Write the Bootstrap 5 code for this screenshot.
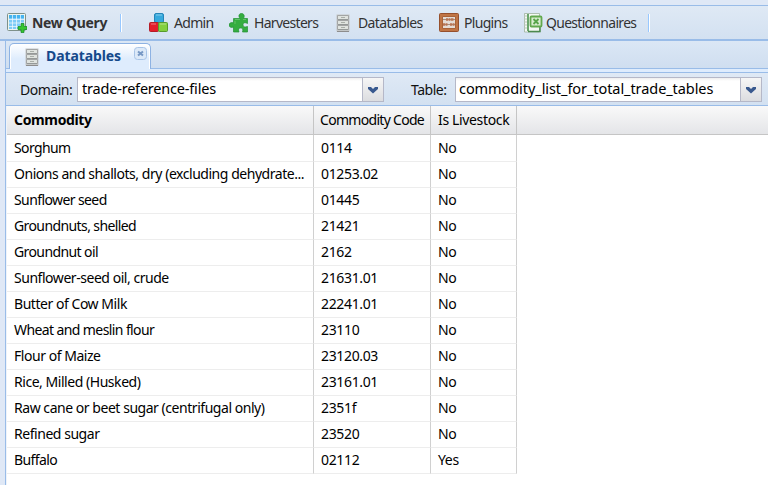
<!DOCTYPE html>
<html lang="en">
<head>
<meta charset="utf-8">
<meta name="viewport" content="width=device-width, initial-scale=1">
<title>Datatables</title>
<link href="https://cdn.jsdelivr.net/npm/bootstrap@5.3.0/dist/css/bootstrap.min.css" rel="stylesheet">
<style>
html,body{height:100%}
body{background:#dfe8f6;font-family:"Noto Sans","Liberation Sans",sans-serif;font-size:14px;line-height:20px;color:#000;letter-spacing:-.35px;overflow:hidden}
.app-bar{margin-top:5px;height:36px;border-top:1px solid #99bce8;border-bottom:2px solid #99bce8;background:linear-gradient(#dfe9f5,#d3e1f1);padding:0 0 0 7px}
.tool{height:33px;color:#333;white-space:nowrap;padding:0;border:0;background:none;text-align:left;letter-spacing:-.7px}
.tool svg{flex:none;margin-right:5px}
.tool-sep{width:2px;height:18px;background:linear-gradient(90deg,#98c8ff 50%,#fff 50%)}
.t-new{width:113px;letter-spacing:-.3px}
.t-admin{width:80px;margin-left:27px}
.t-harv{width:107px}
.t-data{width:103px;letter-spacing:-.6px}
.t-data svg{margin-right:8px}
.t-plug{width:84px}
.t-ques{width:125px;letter-spacing:-.65px;font-size:13.9px}
.t-ques svg{margin-right:3px}
.panel{margin-left:5px;height:444px;border-left:1px solid #99bce8}
.tabs{height:32px;background:linear-gradient(#dbe7f5 0,#cfdef0 27px,#99bce8 27px,#99bce8 28px,#deecfd 28px,#deecfd 31px,#99bce8 31px);padding:2px 0 0 3px}
.tab-item{position:relative;width:142px;height:26px;border:1px solid #8db2e3;border-bottom:0;border-radius:5px 5px 0 0;background:linear-gradient(#fff,#deecfd 60%);box-shadow:inset 1px 1px #fff,inset -1px 0 #fff;padding-left:15px;color:#15498b}
.t-tab{letter-spacing:-.1px;margin:-2px 0 0 -1px}
.tab-close{position:absolute;right:3px;top:3px;line-height:0;padding:0;border:0;background:none}
.filters{height:33px;background:linear-gradient(#dfe9f5,#d3e1f1);border-bottom:1px solid #99bce8;padding:0 6px 0 14px;color:#111}
.filters label{letter-spacing:-.5px;padding-top:1px}
.l-dom{width:57px}
.c-dom{width:307px}
.l-table{width:44px;margin-left:27px}
.c-table{width:307px}
.combo{height:25px;border:1px solid #b5b8c8;background:linear-gradient(#eee,#fff 3px);margin-top:1px}
.combo input{border:0;background:none;outline:0;min-width:0;padding:0 0 3px 4px;height:22px;color:#000;font-size:14.5px;letter-spacing:-.2px}
.c-table input{letter-spacing:-.07px;padding-left:3px}
.combo button{width:21px;border:0;border-left:1px solid #b5b8c8;background:linear-gradient(#f6f6f6,#dcdde0);padding:0;flex:none}
.grid-box{height:379px;background:linear-gradient(#f9f9f9,#e4e5e8 28px,#c5c5c5 28px,#c5c5c5 29px,#fff 29px);border-left:1px solid #eef3fa}
.grid{table-layout:fixed;width:510px;border-collapse:separate;border-spacing:0;margin:0}
.grid th{height:29px;padding:0 0 2px 6px;font-weight:400;border-right:1px solid #c5c5c5;white-space:nowrap}
.grid th:first-child{font-weight:700;padding-left:7px}
.grid th:nth-child(2){letter-spacing:-.7px}
.grid th:nth-child(3){padding-left:7px}
.grid tbody td{height:26px;padding:0 0 2px 7px;border-bottom:1px solid #ededed;border-right:1px solid #d0d0d0;white-space:nowrap;line-height:23px}
.grid tbody td:first-child{letter-spacing:-.46px}
.grid tbody .snug td:first-child{letter-spacing:-.6px}
.grid tbody tr:first-child td{height:27px;padding-top:1px}
</style>
<script src="https://cdn.jsdelivr.net/npm/bootstrap@5.3.0/dist/js/bootstrap.bundle.min.js"></script>
</head>
<body>
<svg class="d-none">
<symbol id="cabinet" viewBox="0 0 14 18"><path d="M0.500 .5h13v17H.5z" fill="#c4c7c7"/><path d="M1 17.500h12" stroke="#8d8d8d"/><g fill="#dfe3df" stroke="#a3a5a5"><path d="M1.5 1.500h11v4h-11zM1.500 6.500h11v4h-11zM1.500 11.500h11v4h-11z"/></g><path d="M5 3.500h4M5 8.500h4M5 13.500h4" stroke="#a9aea9"/><path d="M2 5.500h10M2 10.500h10M2 15.500h10" stroke="#959998"/></symbol>
</svg>
<header class="app-bar d-flex align-items-center">
<button class="tool d-flex align-items-center fw-bold t-new"><svg width="20" height="20" viewBox="0 0 20 20"><rect x=".5" y=".5" width="18" height="17" rx="1" fill="#edf5ef" stroke="#7e918a"/><path d="M2 2h15v14H2z" fill="#7dcbf8"/><path d="M2 2h15v3H2z" fill="#46b4ef"/><path d="M2 6.5h15M2 10h15M2 13.5h15M5.5 2v14M9.5 2v14M13.5 2v14" stroke="#f4fbff" stroke-width=".7"/><path d="M14 10.500h3v3h3v3h-3v3h-3v-3h-3v-3h3z" fill="#36c531" stroke="#118525" stroke-width=".7"/></svg>New Query</button>
<span class="tool-sep"></span>
<button class="tool d-flex align-items-center t-admin"><svg width="20" height="20" viewBox="0 0 20 20"><rect x="5.500" y=".5" width="9" height="9" rx="1.500" fill="#36a9dd" stroke="#2585b8"/><rect x=".5" y="9.500" width="9" height="9" rx="1" fill="#e31e2b" stroke="#b51c28"/><rect x="9.500" y="9.500" width="9" height="9" rx="1" fill="#83cf3f" stroke="#579b2c"/><path d="M7 2h6M2 11h5M11 11h6" stroke="#fff" opacity=".4"/></svg>Admin</button>
<button class="tool d-flex align-items-center t-harv"><svg width="20" height="20" viewBox="0 0 20 20"><path d="M4.500 5.500H11C9 3 10 .5 12.500 .5s3.500 2.500 2 5h4v5c-3-1.500-4.500-.5-4.500 1.500s2 2.500 4.500 1.500v5.500h-5c1-3 0-4-2-4s-2.500 1-1.500 4H4.500v-5c-2 1-4.500 0-4.500-2s2.500-3 4.500-2z" fill="#35ad41" stroke="#229033" stroke-width=".7"/><path d="M6 6.500h5M14 6.500h3M6 8v3" stroke="#76cf79" opacity=".7"/></svg>Harvesters</button>
<button class="tool d-flex align-items-center t-data"><svg width="14" height="18"><use href="#cabinet"/></svg>Datatables</button>
<button class="tool d-flex align-items-center t-plug"><svg width="20" height="20" viewBox="0 0 20 20"><rect x=".5" y=".5" width="19" height="18" rx="1" fill="#c07546" stroke="#96502d"/><path d="M3.500 3.500h13v12h-13z" fill="#e4ddd7" stroke="#a8633a"/><path d="M4 6.500h12M4 11.500h12" stroke="#a78b7a"/><path d="M7 6.500h8M4 11.500h5M11 11.500h5" stroke="#b87453" stroke-width="2.500" stroke-dasharray="2 .5"/></svg>Plugins</button>
<button class="tool d-flex align-items-center t-ques"><svg width="20" height="20" viewBox="0 0 20 20"><path d="M1.500 .500h15V19h-15z" fill="#f4f8f3" stroke="#93a992" stroke-width=".7"/><path d="M5 1v17" stroke="#3f8d42" stroke-width="1.500"/><path d="M1 3h3M1 6h3M1 9h3M1 12h3M1 15h3" stroke="#b9c5b8"/><path d="M5 18.500h12v-5" fill="none" stroke="#4b894e" stroke-width="1.500"/><rect x="7.500" y="3.500" width="11" height="10" rx="1" fill="#d9edd0" stroke="#62a94e" stroke-width="1.800"/><path d="M10.500 6l5 5M15.500 6l-5 5" stroke="#58a549" stroke-width="1.800"/></svg>Questionnaires</button>
<span class="tool-sep"></span>
</header>
<main class="panel">
<nav class="tabs"><div class="tab-item d-flex align-items-center fw-bold"><svg class="flex-shrink-0 me-2" width="14" height="18"><use href="#cabinet"/></svg><span class="t-tab">Datatables</span><button class="tab-close" aria-label="Close"><svg width="13" height="13" viewBox="0 0 13 13"><rect x=".5" y=".5" width="12" height="12" rx="3" fill="#dce9f8" stroke="#a8c4e7"/><path d="M4 4.500l5 4M9 4.500l-5 4" stroke="#7798c5" stroke-width="2"/></svg></button></div></nav>
<section class="filters d-flex align-items-center">
<label class="l-dom">Domain:</label>
<div class="combo c-dom d-flex"><input class="flex-grow-1" aria-label="Domain" value="trade-reference-files"><button aria-label="Open domains"><svg class="d-block mx-auto" width="12" height="8" viewBox="0 0 12 8"><path d="M1 1h3l2 2 2-2h3v2L6 7.500 1 3z" fill="#39598e"/></svg></button></div>
<label class="l-table">Table:</label>
<div class="combo c-table d-flex"><input class="flex-grow-1" aria-label="Table" value="commodity_list_for_total_trade_tables"><button aria-label="Open tables"><svg class="d-block mx-auto" width="12" height="8" viewBox="0 0 12 8"><path d="M1 1h3l2 2 2-2h3v2L6 7.500 1 3z" fill="#39598e"/></svg></button></div>
</section>
<section class="grid-box">
<table class="grid">
<colgroup><col width="307"><col width="117"><col width="86"></colgroup>
<thead><tr><th>Commodity</th><th>Commodity Code</th><th>Is Livestock</th></tr></thead>
<tbody>
<tr class="snug"><td>Sorghum</td><td>0114</td><td>No</td></tr>
<tr><td>Onions and shallots, dry (excluding dehydrate...</td><td>01253.02</td><td>No</td></tr>
<tr class="snug"><td>Sunflower seed</td><td>01445</td><td>No</td></tr>
<tr class="snug"><td>Groundnuts, shelled</td><td>21421</td><td>No</td></tr>
<tr class="snug"><td>Groundnut oil</td><td>2162</td><td>No</td></tr>
<tr><td>Sunflower-seed oil, crude</td><td>21631.01</td><td>No</td></tr>
<tr><td>Butter of Cow Milk</td><td>22241.01</td><td>No</td></tr>
<tr class="snug"><td>Wheat and meslin flour</td><td>23110</td><td>No</td></tr>
<tr><td>Flour of Maize</td><td>23120.03</td><td>No</td></tr>
<tr><td>Rice, Milled (Husked)</td><td>23161.01</td><td>No</td></tr>
<tr><td>Raw cane or beet sugar (centrifugal only)</td><td>2351f</td><td>No</td></tr>
<tr><td>Refined sugar</td><td>23520</td><td>No</td></tr>
<tr class="snug"><td>Buffalo</td><td>02112</td><td>Yes</td></tr>
</tbody>
</table>
</section>
</main>
</body>
</html>
